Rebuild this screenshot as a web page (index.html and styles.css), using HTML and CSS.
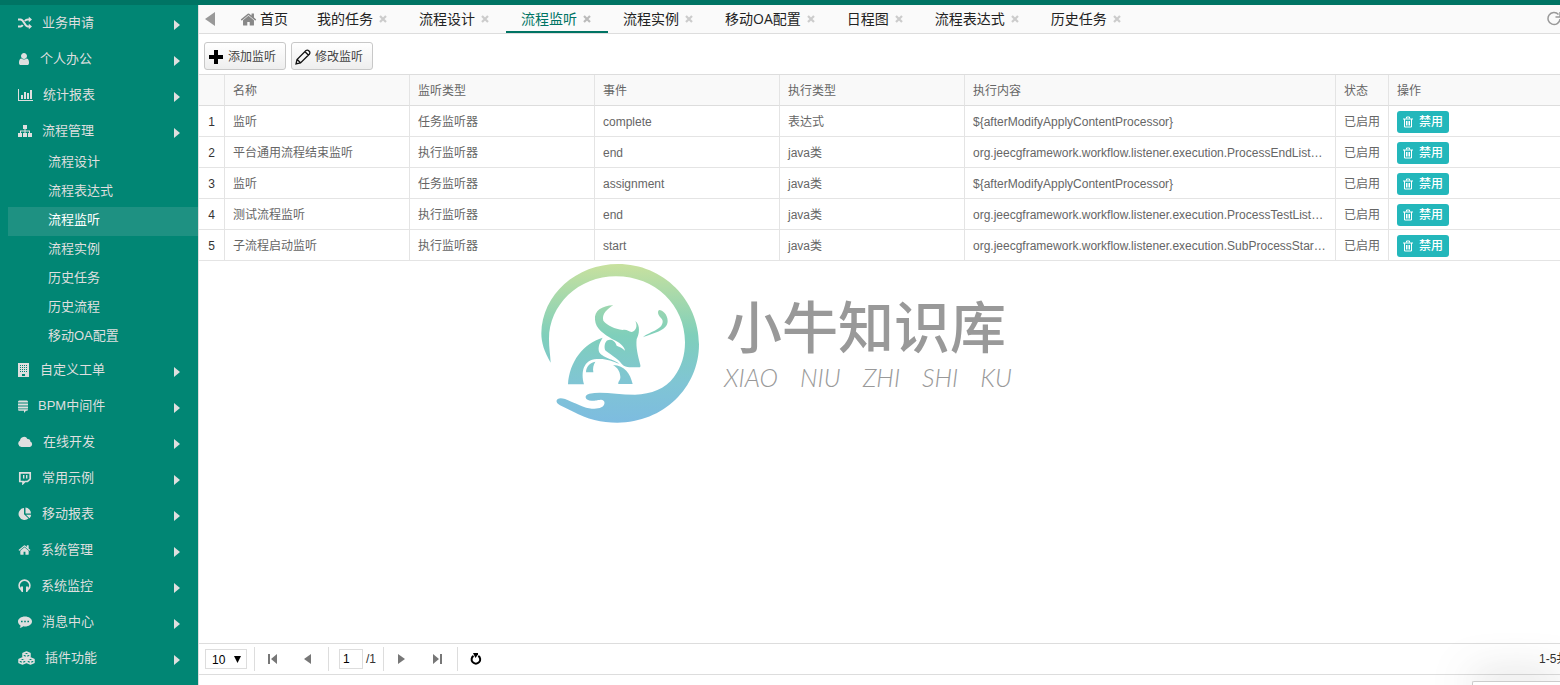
FILE: index.html
```html
<!DOCTYPE html>
<html lang="zh-CN">
<head>
<meta charset="utf-8">
<title>流程监听</title>
<link rel="stylesheet" href="styles.css">
</head>
<body>
<svg class="defs" aria-hidden="true">
  <symbol id="trash" viewBox="0 0 12 12"><path d="M1 3h10M4.500 2.500V1h3v1.500M2.500 3v8h7V3M4.500 5v4.500M6 5v4.500M7.500 5v4.500" fill="none" stroke="currentColor"/></symbol>
  <symbol id="close" viewBox="0 0 10 10"><path d="M2 2l6 6M8 2l-6 6" fill="none" stroke="currentColor" stroke-width="2.200"/></symbol>
  <symbol id="home" viewBox="0 0 1792 1792"><path fill="currentColor" d="M1472 992v480q0 26-19 45t-45 19h-384v-384h-256v384h-384q-26 0-45-19t-19-45v-480q0-1 .5-3t.5-3l575-474 575 474q1 2 1 6zm223-69l-62 74q-8 9-21 11h-3q-13 0-21-7l-692-577-692 577q-12 8-24 7-13-2-21-11l-62-74q-8-10-7-23.500t11-21.500l719-599q32-26 76-26t76 26l244 204v-195q0-14 9-23t23-9h192q14 0 23 9t9 23v408l219 182q10 8 11 21.500t-7 23.500z"/></symbol>
</svg>
<header class="topbar"></header>
<div class="shell">
  <nav class="sidebar">
    <ul class="menu">
      <li><a href="#" class="item"><svg class="ico" viewBox="0 0 14 14"><path d="M0 3.500h2.500c3.500 0 4 7 7.500 7h1.500M0 10.500h2.500c1 0 1.700-.7 2.200-1.500M6.800 5c.7-.9 1.500-1.500 3.200-1.500h1.500" fill="none" stroke="currentColor" stroke-width="2"/><path d="M10.800 .8L14 3.500l-3.200 2.700zM10.800 7.800L14 10.500l-3.200 2.700z"/></svg>业务申请</a></li>
      <li><a href="#" class="item"><svg class="ico w12" viewBox="256 0 1280 1792"><path d="M1536 1399q0 109-62.500 187t-150.500 78h-854q-88 0-150.500-78t-62.500-187q0-85 8.500-160.500t31.500-152 58.500-131 94-89 134.500-34.500q131 128 313 128t313-128q76 0 134.500 34.500t94 89 58.500 131 31.500 152 8.500 160.500zm-256-887q0 159-112.500 271.500t-271.500 112.500-271.500-112.500-112.500-271.500 112.500-271.500 271.500-112.500 271.500 112.500 112.500 271.500z"/></svg>个人办公</a></li>
      <li><a href="#" class="item"><svg class="ico w15" viewBox="0 0 15 14"><path d="M0 1h1v11h14v1H0zM3 7h2v4H3zM6 4h2v7H6zM9 5h2v6H9zM12 2h2v9h-2z"/></svg>统计报表</a></li>
      <li><a href="#" class="item"><svg class="ico" viewBox="0 0 14 14"><path d="M5 1h4v4H7.500v1.500H12V9h2v4h-4V9h1V7.500H7.500V9H9v4H5V9h1.500V7.500H3V9h1v4H0V9h2V6.500h4.500V5H5z"/></svg>流程管理</a>
        <ul class="submenu">
          <li><a href="#">流程设计</a></li>
          <li><a href="#">流程表达式</a></li>
          <li><a href="#" class="current">流程监听</a></li>
          <li><a href="#">流程实例</a></li>
          <li><a href="#">历史任务</a></li>
          <li><a href="#">历史流程</a></li>
          <li><a href="#">移动OA配置</a></li>
        </ul>
      </li>
      <li><a href="#" class="item"><svg class="ico w12" viewBox="0 0 12 14"><path fill-rule="evenodd" d="M0 0h11v14H0zM2 2v1h1V2zM4 2v1h1V2zM6 2v1h1V2zM8 2v1h1V2zM2 4v1h1V4zM4 4v1h1V4zM6 4v1h1V4zM8 4v1h1V4zM2 6v1h1V6zM4 6v1h1V6zM6 6v1h1V6zM8 6v1h1V6zM2 8v1h1V8zM4 8v1h1V8zM6 8v1h1V8zM8 8v1h1V8zM4 11v2h3v-2z"/></svg>自定义工单</a></li>
      <li><a href="#" class="item"><svg class="ico w10" viewBox="0 0 10 14"><path d="M0 3c0-1 .7-1.500 1.500-1.500h7c.8 0 1.500.5 1.500 1.500v.5H0zM0 4.500h10v2H0zM0 7.500h10v2H0zM0 10.300h10c0 1-.7 1.500-1.500 1.500H8L6 14v-2.200H1.500C.7 11.800 0 11.300 0 10.300z"/></svg>BPM中间件</a></li>
      <li><a href="#" class="item"><svg class="ico w15" viewBox="0 0 15 14"><path d="M3.500 12A3.500 3.500 0 0 1 2 5.500 4 4 0 0 1 9.500 4 2.300 2.300 0 0 1 12.300 6.500 2.900 2.900 0 0 1 12 12z"/></svg>在线开发</a></li>
      <li><a href="#" class="item"><svg class="ico" viewBox="0 0 14 14"><path fill="none" stroke="currentColor" stroke-width="1.700" d="M1.800 1.800H12.200V8L9.500 10.500H7L5 12.500V10.500H1.800z"/><path d="M5 4h1.400v3.500H5zM8 4h1.400v3.500H8z"/></svg>常用示例</a></li>
      <li><a href="#" class="item"><svg class="ico" viewBox="0 0 14 14"><path d="M6 1v6.200l4.500 4.300A6 6 0 1 1 6 1zM7.500.5A6 6 0 0 1 13 6.500H7.500zM8 7.700h5.200a6 6 0 0 1-1.700 3.500z"/></svg>移动报表</a></li>
      <li><a href="#" class="item"><svg class="ico w13"><use href="#home"/></svg>系统管理</a></li>
      <li><a href="#" class="item"><svg class="ico w13" viewBox="0 0 13 14"><path fill="none" stroke="currentColor" stroke-width="1.800" d="M2.500 10A5.300 5.300 0 1 1 10.500 10"/><path d="M3 7.500h2V13H3.800L2 10.500zM8 7.500h2l1 3L9.200 13H8z"/></svg>系统监控</a></li>
      <li><a href="#" class="item"><svg class="ico" viewBox="0 0 14 14"><path fill-rule="evenodd" d="M7 1.500c3.900 0 7 2.200 7 5s-3.100 5-7 5c-.6 0-1.200-.1-1.700-.2C4 12.500 2.500 13 1.500 13c.8-.8 1-1.700 1-2.600C1 9.500 0 8.100 0 6.500c0-2.800 3.100-5 7-5zM3 5.700v1.600h1.600V5.700zM6.200 5.700v1.600h1.600V5.700zM9.400 5.700v1.600H11V5.700z"/></svg>消息中心</a></li>
      <li><a href="#" class="item"><svg class="ico w17" viewBox="0 0 17 14"><path fill="none" stroke="currentColor" stroke-width="1.500" stroke-linejoin="round" d="M8.500 1l3.500 1.500v3L8.500 7 5 5.500v-3zM5 2.500L8.500 4 12 2.500M8.500 4v3M4.500 7L8 8.500v3L4.500 13 1 11.500v-3zM1 8.500L4.500 10 8 8.500M4.500 10v3M12.500 7L16 8.500v3L12.500 13 9 11.500v-3zM9 8.500l3.500 1.500L16 8.500M12.500 10v3"/></svg>插件功能</a></li>
    </ul>
  </nav>
  <main class="main">
    <div class="tabs">
      <button class="scroll" aria-label="向左滚动"><svg width="10" height="14" viewBox="0 0 10 14"><path d="M10 0v14L0 7z" fill="#999"/></svg></button>
      <a href="#" class="tab home"><svg class="homeico"><use href="#home"/></svg>首页</a>
      <div class="tab"><a href="#">我的任务</a><button aria-label="关闭"><svg><use href="#close"/></svg></button></div>
      <div class="tab"><a href="#">流程设计</a><button aria-label="关闭"><svg><use href="#close"/></svg></button></div>
      <div class="tab active"><a href="#">流程监听</a><button aria-label="关闭"><svg><use href="#close"/></svg></button></div>
      <div class="tab"><a href="#">流程实例</a><button aria-label="关闭"><svg><use href="#close"/></svg></button></div>
      <div class="tab"><a href="#">移动OA配置</a><button aria-label="关闭"><svg><use href="#close"/></svg></button></div>
      <div class="tab"><a href="#">日程图</a><button aria-label="关闭"><svg><use href="#close"/></svg></button></div>
      <div class="tab"><a href="#">流程表达式</a><button aria-label="关闭"><svg><use href="#close"/></svg></button></div>
      <div class="tab"><a href="#">历史任务</a><button aria-label="关闭"><svg><use href="#close"/></svg></button></div>
      <button class="reload" aria-label="刷新"><svg width="16" height="16" viewBox="0 0 16 16"><path d="M12.500 3.500A6 6 0 1 0 14 8M14 1v5H9.500" fill="none" stroke="#999" stroke-width="1.500"/></svg></button>
    </div>
    <div class="toolbar">
      <button class="btn"><svg viewBox="0 0 16 16"><path d="M6 1h4v5h5v4h-5v5H6v-5H1V6h5z"/></svg>添加监听</button>
      <button class="btn"><svg viewBox="0 0 16 16"><path d="M1 15l1-4.500L11 1.500q1.500-1 3 .5t.5 3L5.500 14zM2.200 10.500l3.300 3.300M10 2.700l3.300 3.300" fill="none" stroke="#111" stroke-width="1.300"/></svg>修改监听</button>
    </div>
    <table class="grid">
      <colgroup><col class="c-no"><col class="c-md"><col class="c-md"><col class="c-md"><col class="c-md"><col class="c-lg"><col class="c-sm"><col></colgroup>
      <thead><tr><th></th><th>名称</th><th>监听类型</th><th>事件</th><th>执行类型</th><th>执行内容</th><th>状态</th><th>操作</th></tr></thead>
      <tbody>
        <tr><td>1</td><td>监听</td><td>任务监听器</td><td>complete</td><td>表达式</td><td>${afterModifyApplyContentProcessor}</td><td>已启用</td><td><button class="ban"><svg><use href="#trash"/></svg>禁用</button></td></tr>
        <tr><td>2</td><td>平台通用流程结束监听</td><td>执行监听器</td><td>end</td><td>java类</td><td>org.jeecgframework.workflow.listener.execution.ProcessEndListener</td><td>已启用</td><td><button class="ban"><svg><use href="#trash"/></svg>禁用</button></td></tr>
        <tr><td>3</td><td>监听</td><td>任务监听器</td><td>assignment</td><td>java类</td><td>${afterModifyApplyContentProcessor}</td><td>已启用</td><td><button class="ban"><svg><use href="#trash"/></svg>禁用</button></td></tr>
        <tr><td>4</td><td>测试流程监听</td><td>执行监听器</td><td>end</td><td>java类</td><td>org.jeecgframework.workflow.listener.execution.ProcessTestListener</td><td>已启用</td><td><button class="ban"><svg><use href="#trash"/></svg>禁用</button></td></tr>
        <tr><td>5</td><td>子流程启动监听</td><td>执行监听器</td><td>start</td><td>java类</td><td>org.jeecgframework.workflow.listener.execution.SubProcessStartListener</td><td>已启用</td><td><button class="ban"><svg><use href="#trash"/></svg>禁用</button></td></tr>
      </tbody>
    </table>
    <div class="pager">
      <span class="size"><select aria-label="每页条数"><option>10</option></select><svg viewBox="0 0 8 8"><path d="M0 0h8L4 8z"/></svg></span>
      <span class="sep"></span>
      <button aria-label="首页"><svg viewBox="0 0 10 10"><path d="M0 0h2v10H0zM9 0v10L3 5z"/></svg></button>
      <button aria-label="上一页"><svg viewBox="0 0 10 10"><path d="M8 0v10L1 5z"/></svg></button>
      <span class="sep"></span>
      <label class="page"><input type="text" value="1" aria-label="页码">/1</label>
      <span class="sep"></span>
      <button aria-label="下一页"><svg viewBox="0 0 10 10"><path d="M1 0v10l7-5z"/></svg></button>
      <button aria-label="末页"><svg viewBox="0 0 10 10"><path d="M8 0h2v10H8zM1 0v10l6-5z"/></svg></button>
      <span class="sep"></span>
      <button class="refresh" aria-label="刷新"><svg viewBox="0 0 12 12"><path d="M3.500 2.800A4.300 4.300 0 1 0 8.300 2.800" fill="none" stroke="#000" stroke-width="2"/><path d="M3 0h5v1.500L5.500 5z"/></svg></button>
      <span class="info">1-5共5条</span>
    </div>
    <div class="popup"></div>
    <div class="watermark">
      <svg class="logo" viewBox="0 0 540 540">
        <defs><linearGradient id="g" gradientUnits="userSpaceOnUse" x1="0" y1="27" x2="0" y2="503"><stop offset="0" stop-color="#c8e19e"/><stop offset=".45" stop-color="#7fcfbb"/><stop offset=".75" stop-color="#80c5d4"/><stop offset="1" stop-color="#7dbce0"/></linearGradient></defs>
        <g fill="url(#g)">
          <path d="M62 323C42 290 34 262 34 235C36 118 140 27 264 27C400 27 507 135 507 268C507 398 400 503 262 503C215 503 170 492 130 470L90 451C74 442 78 430 92 430C108 430 130 445 160 455C180 462 200 464 214 457C228 450 226 433 212 434C200 435 198 437 185 437C165 437 160 420 178 416C215 408 260 419 315 419C365 417 405 402 432 366C455 335 465 300 465 262C465 150 375 64 258 64C145 64 57 150 57 252C57 280 61 300 62 323Z"/>
          <path d="M250 151C215 152 192 168 195 194C197 222 222 236 246 252C268 262 282 272 285 287C274 276 265 275 260 272C254 252 235 250 228 260C221 270 224 285 227 287C250 304 265 312 276 328C283 335 290 337 298 337L327 337C331 337 332 334 331 330C324 302 317 278 320 252C328 238 332 211 316 198C324 215 317 228 305 231C296 230 290 222 278 225C255 222 231 211 220 197C214 178 232 161 250 151Z"/>
          <path d="M218 248C160 265 118 320 114 388H162C152 350 160 315 200 312C230 310 245 318 268 326C250 312 207 306 206 285C205 270 212 258 218 248Z"/>
          <path d="M196 320C180 322 168 335 168 352H190C188 340 190 330 196 320Z"/>
          <path d="M249 330C285 332 300 355 308 387H265C263 380 272 375 271 365C270 348 262 338 249 330Z"/>
          <path d="M388 165C397 165 413 178 413 198C413 228 365 235 339 247C352 232 400 225 398 198C398 190 384 185 384 172C384 168 386 165 388 165Z"/>
        </g>
      </svg>
      <div class="brand">
        <div class="brand-cn">小牛知识库</div>
        <div class="brand-en"><span>XIAO</span><span>NIU</span><span>ZHI</span><span>SHI</span><span>KU</span></div>
      </div>
    </div>
  </main>
</div>
</body>
</html>
```
FILE: styles.css
```css
* { box-sizing: border-box; }
body {
  margin: 0;
  height: 100vh;
  display: flex;
  flex-direction: column;
  overflow: hidden;
  font: 12px/20px "Liberation Sans", "Noto Sans CJK SC", sans-serif;
  color: #666;
  background: #fff;
}
a { color: inherit; text-decoration: none; }
ul { list-style: none; margin: 0; padding: 0; }
button { font: inherit; color: inherit; border: 0; padding: 0; background: none; }
.defs { display: none; }
.topbar { height: 5px; background: #007464; flex: none; }
.shell { flex: 1; display: flex; min-height: 0; }

.sidebar { width: 198px; flex: none; background: #018674; color: #dfdfdf; font-size: 13px; overflow: hidden; }
.item { display: flex; align-items: center; gap: 10px; height: 36px; padding: 0 18px 1px; }
.item::after { content: ""; margin: 5px 0 0 auto; border: 5px solid transparent; border-left: 6px solid #dfdfdf; border-right: 0; }
.ico { width: 14px; height: 14px; fill: currentColor; flex: none; }
.w10 { width: 10px; }
.w12 { width: 12px; }
.w13 { width: 13px; }
.w15 { width: 15px; }
.w17 { width: 17px; }
.submenu a { display: block; height: 29px; line-height: 26px; margin-left: 8px; padding-left: 40px; }
.submenu .current { background: #1e9182; color: #fff; }

.main { flex: 1; min-width: 0; display: flex; flex-direction: column; border-left: 1px solid #ddd; overflow: hidden; position: relative; }
.tabs { display: flex; height: 29px; flex: none; background: #fafafa; border-bottom: 1px solid #ddd; font: 14px/28px "Open Sans", "Noto Sans CJK SC", sans-serif; color: #222; }
.scroll { width: 26px; display: flex; align-items: center; padding-left: 6px; }
.tab { display: flex; align-items: center; gap: 5px; padding: 0 16px 0 15px; white-space: nowrap; height: 28px; }
.tab button { display: flex; color: #ccc; }
.tab button svg { width: 10px; height: 10px; }
.tab.active { color: #007464; box-shadow: inset 0 -2px #007464; }
.tab.active button { color: #bbb; }
.tab.home { gap: 3px; padding-right: 14px; }
.homeico { width: 17px; height: 17px; color: #888; }
.reload { margin-left: auto; width: 14px; overflow: hidden; display: flex; align-items: center; flex: none; }
.reload svg { flex: none; }

.toolbar { display: flex; align-items: center; gap: 5px; height: 40px; padding: 4px 5px 0; flex: none; }
.btn { display: flex; align-items: center; gap: 4px; height: 28px; padding: 2px 9px 0 3px; border: 1px solid #c8c8c8; border-radius: 3px; background: linear-gradient(#fff, #eee); color: #444; }
.btn svg { width: 16px; height: 16px; }

.grid { width: 100%; table-layout: fixed; border-collapse: separate; border-spacing: 0; border-top: 1px solid #ddd; }
.c-no { width: 26px; }
.c-md { width: 185px; }
.c-lg { width: 371px; }
.c-sm { width: 53px; }
.grid th, .grid td { height: 31px; padding: 2px 8px 0; text-align: left; font-weight: 400; border-right: 1px solid #e4e4e4; border-bottom: 1px solid #e4e4e4; overflow: hidden; text-overflow: ellipsis; white-space: nowrap; }
.grid th { background: #f9f9f9; border-bottom-color: #ddd; }
.grid th:last-child, .grid td:last-child { border-right: 0; }
.grid td:first-child { padding: 2px 0 0; text-align: center; color: #333; }
.ban { display: flex; align-items: center; gap: 5px; height: 22px; padding: 0 6px 0 5px; border-radius: 3px; background: #23b7bb; color: #fff; font-weight: 500; }
.ban svg { width: 12px; height: 12px; }

.pager { margin-top: auto; display: flex; align-items: center; height: 32px; margin-bottom: 10px; flex: none; border: solid #ddd; border-width: 1px 0; color: #333; padding-left: 6px; }
.size { display: grid; align-items: center; justify-items: end; }
.size select { grid-area: 1 / 1; width: 42px; height: 20px; font: inherit; color: #000; border: 1px solid #ddd; border-radius: 0; padding: 0 6px; appearance: none; background: #fff; }
.size svg { grid-area: 1 / 1; width: 7px; height: 7px; margin-right: 6px; pointer-events: none; }
.sep { width: 1px; height: 24px; background: #ddd; margin: 0 0 0 7px; }
.pager button { width: 35px; height: 24px; display: flex; align-items: center; justify-content: center; }
.pager button svg { width: 10px; height: 10px; fill: #777; }
.pager button + .sep { margin-left: 3px; }
.pager .refresh svg { width: 12px; height: 12px; fill: #000; }
.page { display: flex; align-items: center; gap: 3px; padding-left: 10px; }
.page input { width: 24px; height: 20px; border: 1px solid #ddd; padding: 0 3px; font: inherit; color: #000; }
.info { margin-left: auto; width: 21px; overflow: hidden; white-space: nowrap; }

.popup { position: absolute; right: 0; bottom: 0; width: 88px; height: 4px; background: #fff; border: solid #ccc; border-width: 1px 0 0 1px; border-radius: 2px 0 0 0; box-shadow: 0 0 40px rgba(0, 0, 0, .7); }
.watermark { position: absolute; left: 331px; top: 250px; display: flex; color: #999; }
.logo { width: 180px; height: 180px; }
.brand { padding: 34px 0 0 14px; width: 302px; }
.brand-cn { font: 500 56px/70px "Noto Sans CJK SC", sans-serif; padding-left: 2px; white-space: nowrap; }
.brand-en { display: flex; justify-content: space-between; padding-top: 6px; font: italic 300 25px/24px Lato, sans-serif; }
```
